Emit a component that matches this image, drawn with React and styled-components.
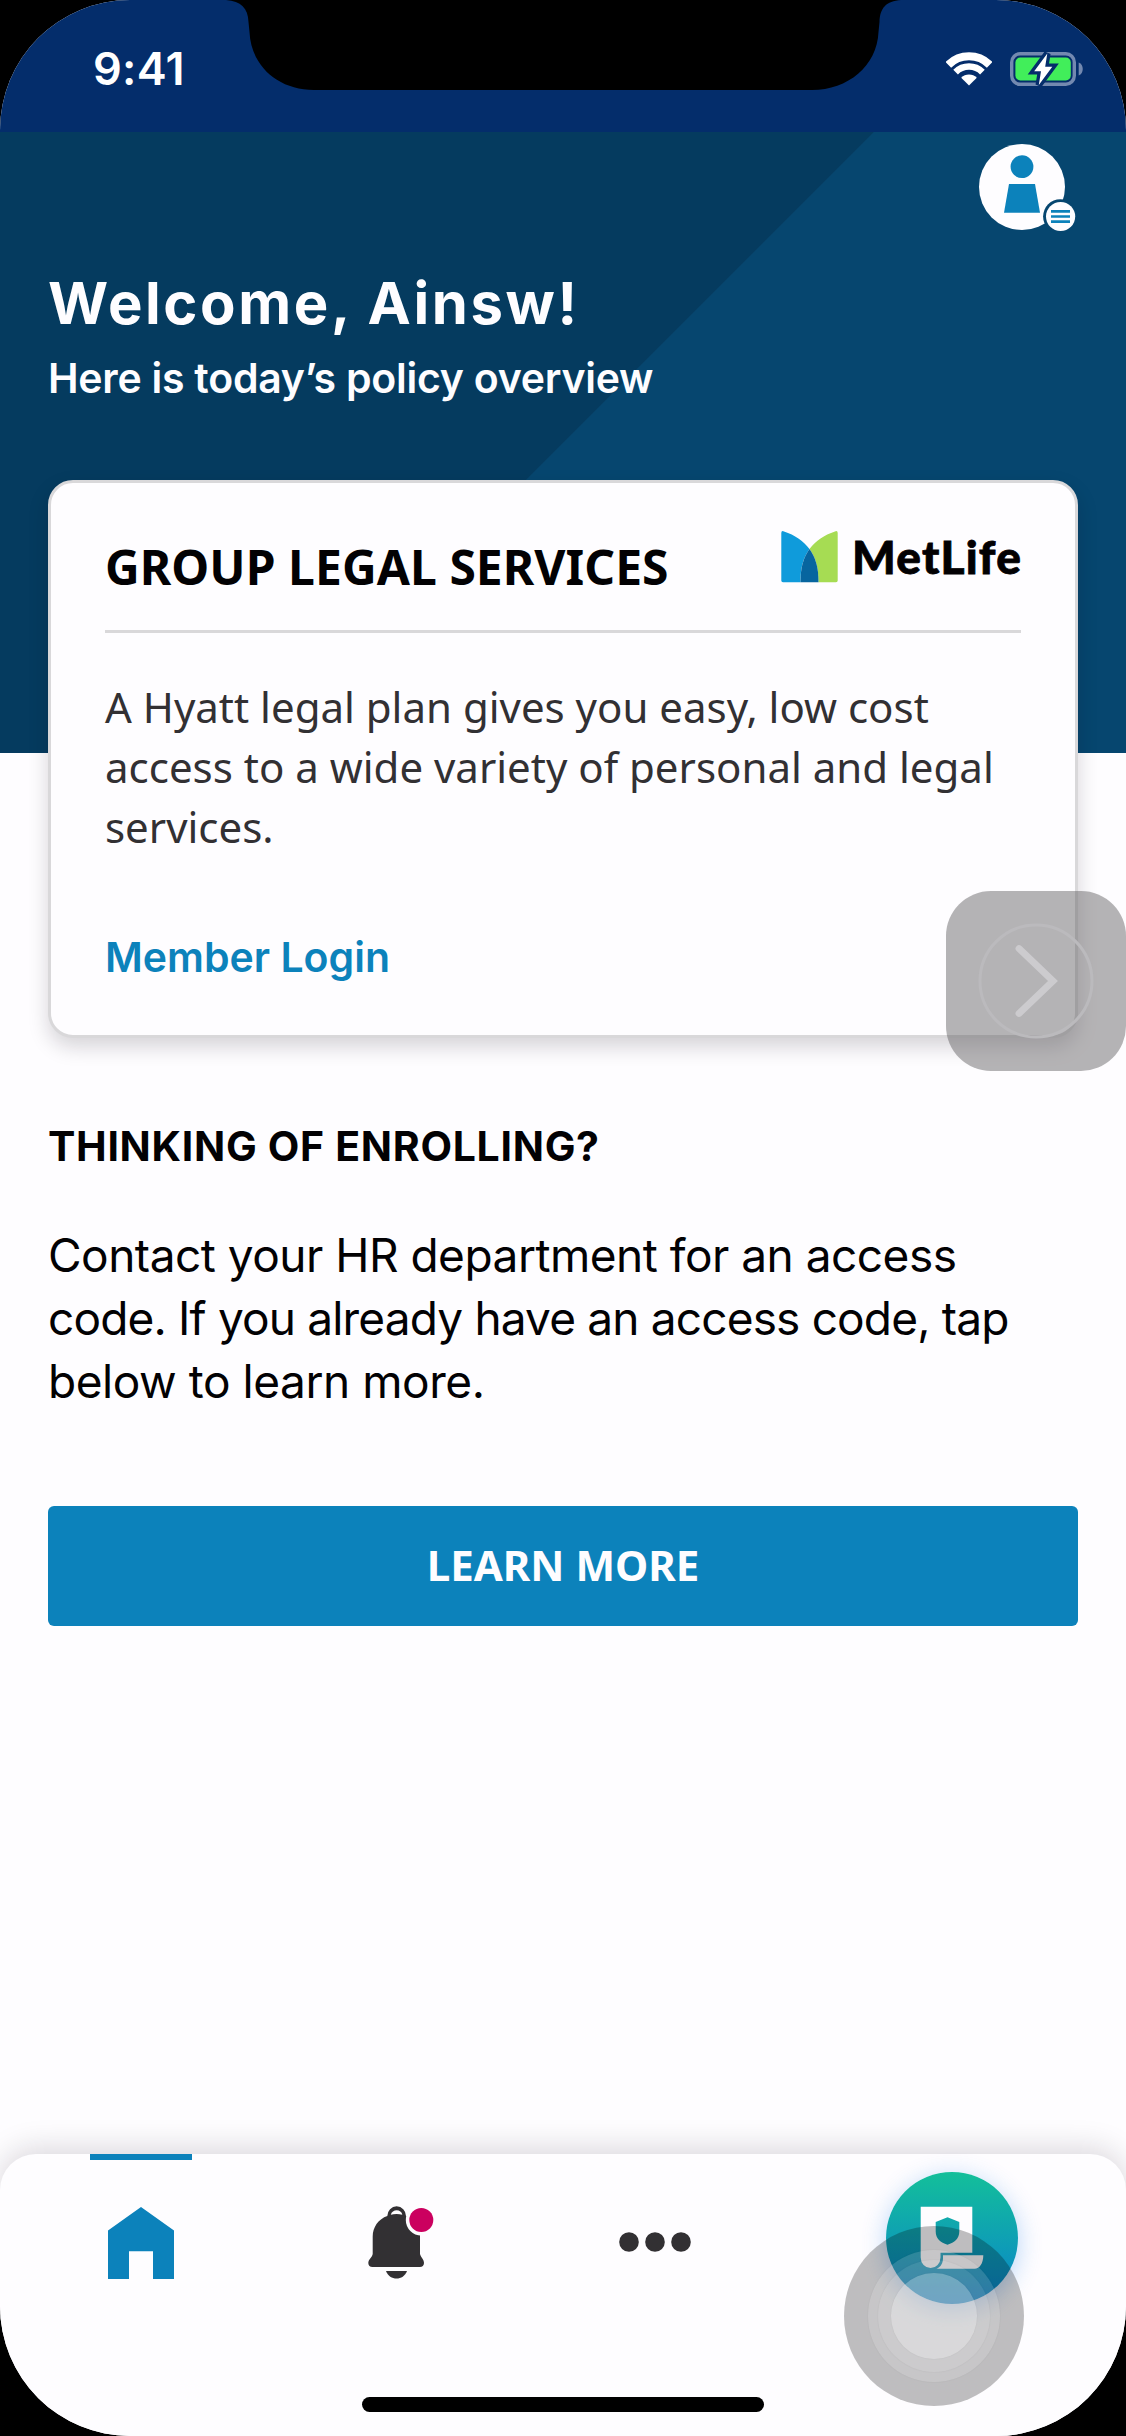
import React from "react";
import styled, { createGlobalStyle } from "styled-components";

const color = {
  navy: "#042d6b",
  teal: "#053b5f",
  tealLight: "#06466f",
  blue: "#0c82bb",
  ink: "#020103",
  body: "#323033",
  line: "#d9d8da",
  paper: "#fefdff",
  alert: "#cb005f",
};

const GlobalStyle = createGlobalStyle`
  *, *::before, *::after { box-sizing: border-box; }
  body { margin: 0; background: #000; }
  h1, h2, p { margin: 0; }
  svg { display: block; flex: none; }
`;

const Screen = styled.div`
  position: relative;
  display: flex;
  flex-direction: column;
  width: 1126px;
  height: 2436px;
  overflow: hidden;
  border-radius: 130px;
  background: ${color.paper};
  font-family: Inter, "Liberation Sans", sans-serif;
  color: ${color.ink};
`;

const StatusBar = styled.div`
  display: flex;
  align-items: center;
  justify-content: space-between;
  flex: none;
  height: 132px;
  padding: 6px 43px 0 93px;
  background: ${color.navy};
`;

const Clock = styled.span`
  font-size: 45px;
  line-height: 54px;
  font-weight: 600;
  letter-spacing: 0.3px;
  color: #fff;
`;

const StatusIcons = styled.div`
  display: flex;
  align-items: center;
  gap: 18px;
`;

const Notch = styled.svg`
  position: absolute;
  top: 0;
  left: 226px;
`;

const Header = styled.header`
  flex: none;
  height: 621px;
  padding: 12px 48px 0;
  background: linear-gradient(135deg, ${color.teal} 50%, ${color.tealLight} 50.05%);
  color: ${color.paper};
`;

const ProfileRow = styled.div`
  display: flex;
  justify-content: flex-end;
  height: 90px;
`;

const Welcome = styled.h1`
  margin-top: 34px;
  font-size: 58px;
  line-height: 70px;
  font-weight: 700;
  letter-spacing: 2.6px;
`;

const Subtitle = styled.p`
  margin-top: 15px;
  font-size: 41px;
  line-height: 50px;
  font-weight: 600;
  letter-spacing: -0.25px;
`;

const Main = styled.main`
  display: flex;
  flex-direction: column;
  padding: 0 48px;
  margin-top: -273px;
`;

const Card = styled.section`
  padding: 48px 54px 53px;
  border: 3px solid ${color.line};
  border-radius: 25px;
  background: ${color.paper};
  box-shadow: 0 9px 20px rgba(20, 10, 25, 0.17);
`;

const CardHead = styled.div`
  display: flex;
  align-items: flex-start;
  justify-content: space-between;
  height: 102px;
  border-bottom: 3px solid ${color.line};
`;

const CardTitle = styled.h2`
  margin-top: 4px;
  font: 700 48px/64px "Noto Sans", sans-serif;
  letter-spacing: 0.05px;
`;

const Brand = styled.div`
  display: flex;
  align-items: flex-start;
  gap: 14px;
`;

const BrandName = styled.span`
  margin-right: -1px;
  font: 900 46px/52px Lato, sans-serif;
  letter-spacing: 1.2px;
  -webkit-text-stroke: 0.8px ${color.ink};
`;

const CardText = styled.p`
  margin-top: 44px;
  font: 400 42px/60px "Noto Sans", sans-serif;
  color: ${color.body};
`;

const CardLink = styled.a`
  display: block;
  margin-top: 75px;
  font-size: 41px;
  line-height: 50px;
  font-weight: 600;
  color: ${color.blue};
`;

const SectionTitle = styled.h2`
  margin-top: 83px;
  font-size: 41px;
  line-height: 50px;
  font-weight: 700;
  letter-spacing: 0.7px;
`;

const SectionText = styled.p`
  margin-top: 53px;
  font-size: 46px;
  line-height: 63px;
`;

const Line = styled.span`
  display: block;
  letter-spacing: ${(p) => p.$tracking}px;
`;

const PrimaryButton = styled.button`
  height: 120px;
  margin-top: 93px;
  padding: 0 0 2px;
  border: 0;
  border-radius: 6px;
  background: ${color.blue};
  color: ${color.paper};
  font: 700 42px/60px "Noto Sans", sans-serif;
`;

const AssistButton = styled.div`
  position: absolute;
  top: 891px;
  right: 0;
  display: grid;
  place-items: center;
  width: 180px;
  height: 180px;
  border-radius: 45px;
  background: rgba(93, 91, 94, 0.46);
`;

const TabBar = styled.nav`
  display: flex;
  flex-direction: column;
  align-items: center;
  flex: none;
  height: 282px;
  margin-top: auto;
  border-radius: 36px 36px 0 0;
  background: ${color.paper};
  box-shadow: 0 -6px 30px rgba(20, 10, 25, 0.15);
`;

const Tabs = styled.div`
  display: grid;
  grid-template-columns: 257px 257px 257px 337px;
  align-self: stretch;
  height: 178px;
  padding-left: 12.5px;
`;

const Tab = styled.div`
  position: relative;
  display: flex;
  align-items: center;
  justify-content: center;
  padding-bottom: ${(p) => p.$lift || 0}px;

  &::before {
    content: "";
    display: ${(p) => (p.$active ? "block" : "none")};
    position: absolute;
    top: 0;
    left: calc(50% - 51px);
    width: 102px;
    height: 6px;
    background: ${color.blue};
  }
`;

const PolicyBubble = styled.div`
  width: 132px;
  height: 132px;
  border-radius: 50%;
  background: linear-gradient(#13bf9a, #0a82cc);
  box-shadow: 0 5px 24px rgba(20, 120, 230, 0.3);
`;

const HomeIndicator = styled.div`
  width: 402px;
  height: 15px;
  margin-top: 65px;
  border-radius: 8px;
  background: #000;
`;

const Touch = styled.div`
  position: absolute;
  left: 844px;
  top: 2226px;
  display: grid;
  place-items: center;
  width: 180px;
  height: 180px;
  border-radius: 50%;
  background: rgba(0, 0, 0, 0.25);
`;

const TouchRing = styled.div`
  display: grid;
  place-items: center;
  width: ${(p) => p.$size}px;
  height: ${(p) => p.$size}px;
  border-radius: 50%;
  background: rgba(255, 255, 255, ${(p) => p.$alpha});
  box-shadow: 0 0 2px rgba(0, 0, 0, 0.06);
`;

const WifiIcon = () => (
  <svg width="46" height="34" viewBox="0 0 46 34" fill="none" stroke="#fff">
    <path d="M2.3 12.8A29.3 29.3 0 0 1 43.7 12.8" strokeWidth="8" />
    <path d="M9.6 20.1A19 19 0 0 1 36.4 20.1" strokeWidth="6.6" />
    <path d="M15.2 25.7A11 11 0 0 1 30.8 25.7L23 33.5Z" fill="#fff" stroke="none" />
  </svg>
);

const BatteryIcon = () => (
  <svg width="73" height="36" viewBox="0 0 73 36">
    <rect x="1.7" y="2.7" width="62.6" height="30.6" rx="8.5" fill="none" stroke="#7389b0" strokeWidth="3.4" />
    <rect x="5.4" y="6.5" width="55.4" height="23" rx="5" fill="#41ee5a" />
    <path d="M68.7 11.5c5.4 1.8 5.4 11.2 0 13z" fill="#7389b0" />
    <path d="M37.3 2.5L24.2 20.3H31L28.8 34L42.3 15.8H35.2z" fill="#fff" stroke={color.navy} strokeWidth="6.6" strokeLinejoin="miter" paintOrder="stroke" />
  </svg>
);

const ProfileIcon = () => (
  <svg width="99" height="90" viewBox="0 0 99 90">
    <circle cx="43" cy="43" r="43" fill={color.paper} />
    <circle cx="43" cy="22.7" r="11.4" fill={color.blue} />
    <path d="M30 40H56L61 68.7H25z" fill={color.blue} />
    <circle cx="81.3" cy="72.5" r="17.2" fill={color.tealLight} />
    <circle cx="81.6" cy="72.5" r="14.6" fill={color.paper} />
    <path d="M72 67.3h19M72 72.5h19M72 77.7h19" stroke={color.blue} strokeWidth="2.7" />
  </svg>
);

const MetLifeMark = () => (
  <svg width="57" height="52" viewBox="0 0 57 52">
    <path d="M.3 2Q.3-.6 3 .4C14 4 22 9.6 28.5 18C22 27 19.5 37 19.5 51.3H2Q.3 51.3 .3 49.5z" fill="#0f9bdb" />
    <path d="M56.7 2Q56.7-.6 54 .4C43 4 35 9.6 28.5 18C35 27 37.5 37 37.5 51.3H55Q56.7 51.3 56.7 49.5z" fill="#a6dc53" />
    <path d="M28.5 18C22 27 19.5 37 19.5 51.3H37.5C37.5 37 35 27 28.5 18z" fill="#07659f" />
  </svg>
);

const ChevronIcon = () => (
  <svg width="120" height="120" viewBox="0 0 120 120" fill="none">
    <circle cx="60" cy="60" r="56" stroke="#bbbabd" strokeWidth="3" />
    <path d="M43 27.5L77 60L43 92.5" stroke="#cccbce" strokeWidth="6.8" strokeLinecap="round" />
  </svg>
);

const HomeIcon = () => (
  <svg width="66" height="72" viewBox="0 0 66 72">
    <path d="M33 0L66 23.5V72H45V44.3H21V72H0V23.5z" fill={color.blue} />
  </svg>
);

const BellIcon = () => (
  <svg width="78" height="73" viewBox="-9 0 78 73">
    <path
      fillRule="evenodd"
      fill={color.body}
      d="M19.3 10A9.35 9.7 0 0 1 38 10C46.5 13 52 21 52 30.5V48C53 51.5 56 53.5 56 57A4.2 4.2 0 0 1 51.8 61H4.5A4.2 4.2 0 0 1 .3 57C.3 53.5 4 51.5 4.7 48V30.5C4.7 21 10.5 13 19.3 10zM22.8 8.7C26 7.7 31 7.7 34.3 8.7C33.5 2.6 24 2.6 22.8 8.7z"
    />
    <path d="M18 65H39C35.5 75 21.5 75 18 65z" fill={color.body} />
    <circle cx="53.3" cy="14" r="15.5" fill={color.paper} />
    <circle cx="53.3" cy="14" r="12" fill={color.alert} />
  </svg>
);

const MoreIcon = () => (
  <svg width="74" height="22" viewBox="0 0 74 22" fill={color.body}>
    <circle cx="11" cy="11" r="9.8" />
    <circle cx="37" cy="11" r="9.8" />
    <circle cx="63" cy="11" r="9.8" />
  </svg>
);

const PolicyIcon = () => (
  <svg width="132" height="132" viewBox="0 0 132 132" fill={color.paper}>
    <path
      fillRule="evenodd"
      d="M34.7 34.7H86.3V80.7H54.5V85.5A9.9 10.5 0 0 1 34.7 85.5zM61.5 45.3L49.7 50V59.5C49.7 66.5 54.5 70.7 61.5 72.7C68.5 70.7 73.3 66.5 73.3 59.5V50z"
    />
    <path d="M57 83.2H97.3C97.3 91.5 93.5 96.7 88.5 96.7H50.5C55 95 57 91 57 86z" />
  </svg>
);

export default function App() {
  return (
    <>
      <GlobalStyle />
      <Screen>
        <StatusBar>
          <Clock>9:41</Clock>
          <StatusIcons>
            <WifiIcon />
            <BatteryIcon />
          </StatusIcons>
        </StatusBar>
        <Notch width="675" height="90" viewBox="0 0 675 90">
          <path d="M0 0C15 1 22 8 22.5 22L23.5 32C25 66 52 90 88 90H586C622 90 651 66 652.5 32L653.5 22C654 8 660 1 675 0z" />
        </Notch>

        <Header>
          <ProfileRow>
            <ProfileIcon />
          </ProfileRow>
          <Welcome>Welcome, Ainsw!</Welcome>
          <Subtitle>Here is today’s policy overview</Subtitle>
        </Header>

        <Main>
          <Card>
            <CardHead>
              <CardTitle>GROUP LEGAL SERVICES</CardTitle>
              <Brand>
                <MetLifeMark />
                <BrandName>MetLife</BrandName>
              </Brand>
            </CardHead>
            <CardText>
              A Hyatt legal plan gives you easy, low cost access to a wide variety of personal and legal services.
            </CardText>
            <CardLink>Member Login</CardLink>
          </Card>

          <SectionTitle>THINKING OF ENROLLING?</SectionTitle>
          <SectionText>
            <Line $tracking={-0.5}>Contact your HR department for an access</Line>
            <Line $tracking={-0.83}>code. If you already have an access code, tap</Line>
            <Line $tracking={-0.45}>below to learn more.</Line>
          </SectionText>
          <PrimaryButton>LEARN MORE</PrimaryButton>
        </Main>

        <TabBar>
          <Tabs>
            <Tab $active>
              <HomeIcon />
            </Tab>
            <Tab $lift={1}>
              <BellIcon />
            </Tab>
            <Tab $lift={2}>
              <MoreIcon />
            </Tab>
            <Tab $lift={10}>
              <PolicyBubble>
                <PolicyIcon />
              </PolicyBubble>
            </Tab>
          </Tabs>
          <HomeIndicator />
        </TabBar>

        <AssistButton>
          <ChevronIcon />
        </AssistButton>
        <Touch>
          <TouchRing $size={132} $alpha={0.15}>
            <TouchRing $size={112} $alpha={0.09}>
              <TouchRing $size={86} $alpha={0.26} />
            </TouchRing>
          </TouchRing>
        </Touch>
      </Screen>
    </>
  );
}
